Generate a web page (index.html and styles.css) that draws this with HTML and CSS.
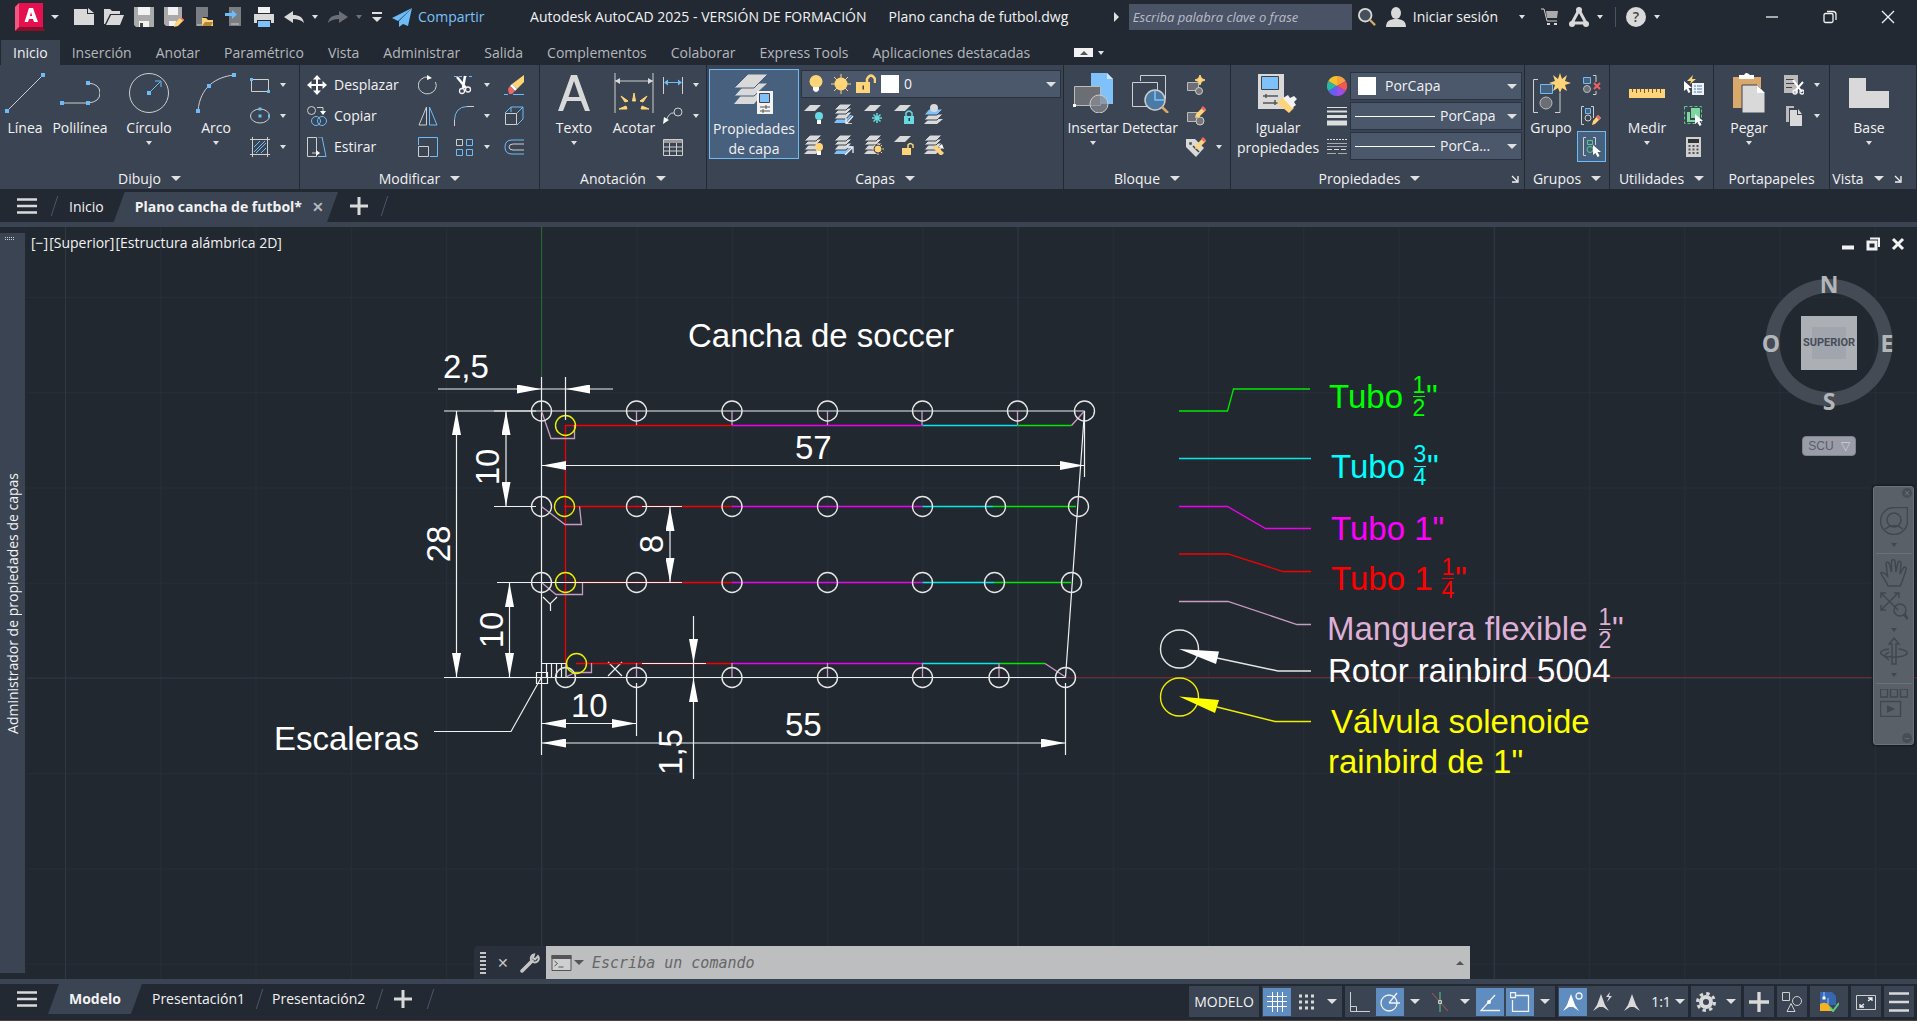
FILE: index.html
```
<!DOCTYPE html>
<html lang="es">
<head>
  <meta charset="UTF-8" />
  <meta name="viewport" content="width=device-width, initial-scale=1.0" />
  <title>Plano cancha de futbol.dwg</title>
  <link rel="stylesheet" href="styles.css">
</head>
<body>

  <!-- Icon library -->
  <svg class="icon-defs" aria-hidden="true">
    <defs>
      <symbol id="logo" viewBox="0 0 30 28"><path d="M0 3 4 0H28V24L30 28H0Z" fill="#8b0e2b"/><path d="M4 0H28V24H4Z" fill="#e51050"/><path d="M0 4 4 0V24L0 28Z" fill="#f3577f"/><path fill-rule="evenodd" d="M14 5h4l5 14h-4l-1-3h-4l-1 3H9.500ZM15 13h2.200L16 9Z" fill="#fff"/></symbol>
      <symbol id="new" viewBox="0 0 20 20"><path d="M0 2h13v5h7v11H0Z" class="fw"/><path d="M14 1l6 5h-6Z" class="fw"/></symbol>
      <symbol id="open" viewBox="0 0 20 20"><path d="M0 2h6l2 2h8v3H6L1 17H0Z" class="fw"/><path d="M7 8h13l-4 10H2Z" class="fw"/></symbol>
      <symbol id="save" viewBox="0 0 20 20"><path d="M0 0h20v20H2l-2-2Z" fill="#aaa"/><path d="M4 0h12v8H4ZM5 14h10v6H5Z" fill="#f2f2f2"/><path d="M6 16h3v4H6Z" fill="#444"/></symbol>
      <symbol id="saveas" viewBox="0 0 20 20"><path d="M0 0h18v12l-7 7H2l-2-2Z" fill="#aaa"/><path d="M4 0h10v8H4ZM5 14h7v5H5Z" fill="#f2f2f2"/><path d="m17 10 3 3-6 6-4 1 1-4Z" class="fy"/><path d="m17 10 3 3-1 1-3-3Z" fill="#e66"/></symbol>
      <symbol id="webopen" viewBox="0 0 20 20"><path d="M2 0h12v10H9v9H2Z" fill="#7a7d82"/><path d="M3 18h6" class="w"/><path d="M8 11h4l2 2h5v6H8Z" class="fy"/><path d="m8 19 3-4h8l-2 4Z" fill="#b8863b"/></symbol>
      <symbol id="websave" viewBox="0 0 20 20"><path d="M5 0h12v19H5Z" fill="#7a7d82"/><path d="M7 17h8" class="w"/><path d="M1 6h7V3l5 4.500-5 4.500V9H1Z" class="fb"/></symbol>
      <symbol id="print" viewBox="0 0 20 20"><path d="M4 0h12v6H4Z" fill="#f2f2f2"/><path d="M0 7h20v9h-3v-3H3v3H0Z" class="fw"/><path d="M4 14h12v6H4Z" fill="#7fc2fb"/></symbol>
      <symbol id="undo" viewBox="0 0 20 20"><path d="M0 10 9 4v4c6 0 10 2 11 8-3-3-6-4-11-4v4Z" class="fw"/></symbol>
      <symbol id="plane" viewBox="0 0 20 20"><path d="M20 1 0 11l6 3Z" class="fb"/><path d="M20 1 7 14v6l4-3 5 2Z" class="fb"/></symbol>
      <symbol id="search" viewBox="0 0 20 20"><circle cx="8" cy="8" r="7" fill="#46505c" stroke="#d9d9d9" stroke-width="2"/><path d="m13 13 6 6" stroke="#d9a86a" stroke-width="2.500"/></symbol>
      <symbol id="user" viewBox="0 0 20 20"><ellipse cx="10" cy="6" rx="5" ry="6" class="fw"/><path d="M0 20c0-6 4-8 10-8s10 2 10 8Z" class="fw"/></symbol>
      <symbol id="cart" viewBox="0 0 18 18"><path d="M0 1h3l3 12h10" class="w"/><path d="M5 3h12l-1 7H6Z" fill="#aaa"/><path d="M6 15h3v2H6zM13 15h3v2h-3z" class="fw"/></symbol>
      <symbol id="apps" viewBox="0 0 20 20"><path d="M10 3 3 16h14Z" fill="none" stroke="#d9d9d9" stroke-width="3"/><circle cx="10" cy="3" r="3" class="fw"/><circle cx="3" cy="17" r="3" class="fw"/><circle cx="17" cy="17" r="3" class="fw"/></symbol>
      <symbol id="min" viewBox="0 0 14 14"><path d="M1 7h12" class="ww"/></symbol>
      <symbol id="restore" viewBox="0 0 14 14"><rect x="1" y="3.500" width="9" height="9" rx="1.500" class="ww"/><path d="M4 1.500h6q3 0 3 3V10" class="ww"/></symbol>
      <symbol id="close" viewBox="0 0 14 14"><path d="m1 1 12 12M13 1 1 13" class="ww"/></symbol>
      <symbol id="burger" viewBox="0 0 20 16"><path d="M0 1.500h20M0 8h20M0 14.500h20" stroke="#d9d9d9" stroke-width="2.500"/></symbol>
      <symbol id="plus" viewBox="0 0 18 18"><path d="M9 0v18M0 9h18" stroke="#d9d9d9" stroke-width="3"/></symbol>

      <symbol id="line" viewBox="0 0 40 40"><path d="M2 38 38 2" class="w"/><path d="M0 36h4v4H0zM36 0h4v4h-4z" class="fb"/></symbol>
      <symbol id="pline" viewBox="0 0 40 40"><path d="M1 30h27q12-1 12-10T28 10" class="w"/><path d="M0 28h4v4H0zM26 28h4v4h-4zM26 8h4v4h-4z" class="fb"/></symbol>
      <symbol id="circle" viewBox="0 0 40 40"><circle cx="20" cy="20" r="19.500" class="w"/><path d="m20 20 11-11M26 8h6v6" class="b"/><path d="M18 18h4v4h-4z" class="fb"/></symbol>
      <symbol id="arc" viewBox="0 0 40 40"><path d="M2 38C4 14 20 4 38 2" class="w"/><path d="M0 36h4v4H0zM11 11h4v4h-4zM36 0h4v4h-4z" class="fb"/></symbol>
      <symbol id="rect" viewBox="0 0 20 20"><path d="M1.500 4.500h17v12h-17z" class="w"/><path d="M0 3h3v3H0zM17 15h3v3h-3z" class="fb"/></symbol>
      <symbol id="ellipse" viewBox="0 0 20 20"><ellipse cx="10" cy="10" rx="9.500" ry="7" class="w"/><path d="M8.500 8.500h3v3h-3zM8.500 1.500h3v3h-3zM18 8.500h2v3h-2z" class="fb"/></symbol>
      <symbol id="hatch" viewBox="0 0 20 20"><path d="M0 2.500h20M0 17.500h20M2.500 0v20M17.500 0v20" class="w"/><path d="m4 10 6-6M4 15 15 4M6 16l10-10M11 16l5-5" class="b"/></symbol>

      <symbol id="move" viewBox="0 0 20 20"><path d="M10 2v16M2 10h16" stroke="#fff" stroke-width="2"/><path d="m10 0 4 4.500H6ZM10 20l4-4.500H6ZM0 10l4.500-4v8ZM20 10l-4.500-4v8Z" fill="#fff"/></symbol>
      <symbol id="copy" viewBox="0 0 20 20"><circle cx="4.500" cy="4.500" r="4" class="w"/><path d="M10 1.500h6V5" class="w"/><path d="M13 5h6l-3 4Z" fill="#fff"/><circle cx="9" cy="15" r="4.500" class="b"/><circle cx="15" cy="15" r="4.500" class="b"/></symbol>
      <symbol id="stretch" viewBox="0 0 20 20"><path d="M.5.5h9v19h-9zM5 16h6" class="w"/><path d="M11 0h4l4 19.500h-8" class="b"/><path d="m9 13 4 3-4 3Z" fill="#fff"/></symbol>
      <symbol id="rotate" viewBox="0 0 20 20"><path d="M17.500 7a9 8.500 0 1 1-7-5" class="w"/><path d="M9 0v5l5-2Z" fill="#fff"/></symbol>
      <symbol id="mirror" viewBox="0 0 20 20"><path d="M8.500 1v18H1Z" class="w"/><path d="M11.500 1v18H19Z" class="b"/></symbol>
      <symbol id="scale" viewBox="0 0 20 20"><path d="M.5 8V.5h19v19H12" class="b"/><path d="M.5 9.500h10v10H.5z" class="w"/></symbol>
      <symbol id="trim" viewBox="0 0 20 20"><path d="M0 1.500h20" class="b" stroke-dasharray="3 2"/><path d="m3 2 9 11M11 1 9 13" stroke="#fff" stroke-width="2.500"/><circle cx="8" cy="16" r="2.500" class="ww"/><circle cx="14" cy="14.500" r="2.500" class="ww"/></symbol>
      <symbol id="fillet" viewBox="0 0 20 20"><path d="M.5 20v-6M13 .5h7" class="w"/><path d="M.5 14Q1 1 13 .5" class="b"/></symbol>
      <symbol id="array" viewBox="0 0 20 20"><path d="M2.500 2.500h6v6h-6z" class="w"/><path d="M12.500 2.500h6v6h-6zM2.500 12.500h6v6h-6zM12.500 12.500h6v6h-6z" class="b"/></symbol>
      <symbol id="erase" viewBox="0 0 20 20"><path d="M20 0v7l-7 7-5-5Z" class="fy"/><path d="m8 9 5 5-2 2-5-5Z" fill="#fff"/><path d="m6 11 5 5-3 3H5l-1-5Z" fill="#e66"/><path d="M0 19.500h4M9 19.500h11" class="b"/></symbol>
      <symbol id="explode" viewBox="0 0 20 20"><path d="M1.500 7.500h11v11h-11z" class="w"/><path d="m1 7 6-6h12v12l-6 6M7 1v5M19 1l-6 6" class="b"/></symbol>
      <symbol id="offset" viewBox="0 0 20 20"><path d="M20 3H8Q1 3 1 10t7 7h12" class="b"/><path d="M20 7H9Q5 7 5 10t4 3h11" class="w"/></symbol>

      <symbol id="text" viewBox="0 0 40 40"><path fill-rule="evenodd" d="M17 2h6l13 36h-5l-4-10H13L9 38H4ZM20 8 14.500 24h11Z" class="fw"/></symbol>
      <symbol id="dim" viewBox="0 0 40 40"><path d="M1 0v40M39 0v40M1 8h38" class="w"/><path d="m1 8 5-3v6ZM39 8l-5-3v6Z" class="fw"/><path d="m18.500 28 1.500-8 1.500 8ZM14 28l-7-5 4 6ZM26 28l7-5-4 6ZM12 33l-7 3h8ZM28 33l7 3h-8Z" fill="#ffd479" stroke="#ffd479"/></symbol>
      <symbol id="dimlin" viewBox="0 0 20 20"><path d="M.5 2v17M19.500 2v17" class="w"/><path d="M2 7.500h16" class="b"/><path d="m1 7.500 4-3v6ZM19 7.500l-4-3v6Z" class="fb"/></symbol>
      <symbol id="leader" viewBox="0 0 20 20"><circle cx="15" cy="6" r="4" class="w"/><path d="M11 7Q6 6 3 15" class="w"/><path d="m0 18 1-7 5 3Z" fill="#fff"/></symbol>
      <symbol id="table" viewBox="0 0 20 20"><path d="M.5 2.500h19v16H.500zM.5 10h19M.5 14h19M6.500 6v12M13.500 6v12" class="w"/><path d="M1 3h18v3H1Z" fill="#999"/></symbol>

      <symbol id="layers" viewBox="0 0 40 40"><path d="M10 18h20L20 30H0Z" class="fw"/><path d="M12 9h22L20 22H0Z" class="fw" stroke="#46607e"/><path d="M14 0h20L20 14H0Z" class="fw" stroke="#46607e"/><path d="M23 17h16v23H23Z" fill="#f2f2f2"/><path d="M25.500 19.500h10v9h-10z" fill="#7fc2fb" stroke="#444"/><path d="M26 33h10M26 37h10M32 31v4M29 35v4" stroke="#555"/></symbol>
      <symbol id="sheet" viewBox="0 0 20 20"><path d="M6 1h11l-6 6H0Z" class="fw"/></symbol>
      <symbol id="stack" viewBox="0 0 20 20"><path d="M6 13h12l-6 6H0Z" class="fw"/><path d="M6 8h12l-6 7H0Z" class="fw" stroke="#3b4453"/><path d="M6 4h12l-6 6H0Z" class="fw" stroke="#3b4453"/><path d="M6 0h12l-6 6H0Z" class="fw" stroke="#3b4453"/></symbol>
      <symbol id="stackblue" viewBox="0 0 20 20"><path d="M6 11h12l-6 8H0Z" fill="#7fc2fb"/><path d="M6 8h12l-6 7H0Z" class="fw" stroke="#3b4453"/><path d="M6 4h12l-6 6H0Z" class="fw" stroke="#3b4453"/><path d="M6 0h12l-6 6H0Z" class="fw" stroke="#3b4453"/></symbol>
      <symbol id="l-off" viewBox="0 0 20 20"><use href="#sheet"/><circle cx="15" cy="12" r="4" fill="#67d9e0"/><path d="M13 16h4v4h-4z" fill="#fff"/></symbol>
      <symbol id="l-match" viewBox="0 0 20 20"><use href="#stackblue"/><path d="m19 12-6 7m-1-5v6h6" class="ww"/></symbol>
      <symbol id="l-freeze" viewBox="0 0 20 20"><use href="#sheet"/><path d="M13 9v10M8 14h10M9.500 10.500l7 7M16.500 10.500l-7 7" stroke="#67d9e0" stroke-width="1.500"/></symbol>
      <symbol id="l-lock" viewBox="0 0 20 20"><use href="#sheet"/><path d="M10 12h10v8H10Z" fill="#67d9e0"/><path d="M12 12V9q3-4 6 0v3" fill="none" stroke="#67d9e0" stroke-width="1.500"/><path d="M14.500 14h1.500v3h-1.500z" fill="#333"/></symbol>
      <symbol id="l-current" viewBox="0 0 20 20"><path d="M5 15h14l-6 5H0Z" class="fw"/><path d="M5 10h14l-6 6H0Z" class="fw" stroke="#3b4453"/><path d="M5 5h14l-6 6H0Z" fill="#7fc2fb" stroke="#3b4453"/><circle cx="10" cy="4" r="4" class="fw"/></symbol>
      <symbol id="l-on" viewBox="0 0 20 20"><use href="#stack"/><circle cx="15" cy="12" r="4" class="fy"/><path d="M13 16h4v4h-4z" fill="#fff"/></symbol>
      <symbol id="l-prev" viewBox="0 0 20 20"><use href="#stackblue"/><path d="m11 20 7-7m-5-1h6v6" class="ww"/></symbol>
      <symbol id="l-thaw" viewBox="0 0 20 20"><use href="#stack"/><path d="M14 8v12M8 14h12M10 10l8 8M18 10l-8 8" stroke="#ffd479"/><circle cx="14" cy="14" r="4" class="fy" stroke="#3b4453"/></symbol>
      <symbol id="l-unlock" viewBox="0 0 20 20"><use href="#sheet"/><path d="M8 13h9v7H8Z" class="fy"/><path d="M14 13v-3q2-3 5 0v3" fill="none" stroke="#ffd479" stroke-width="1.500"/></symbol>
      <symbol id="l-walk" viewBox="0 0 20 20"><use href="#stack"/><path d="m9 13 3-3 8 8-3 3Z" class="fy"/><path d="m14 12 4-3 2 5Z" fill="#fff"/></symbol>
      <symbol id="bulb" viewBox="0 0 20 20"><circle cx="10" cy="7.500" r="6.500" class="fy"/><path d="M7 13h6v3q-3 4-6 0Z" fill="#fff"/></symbol>
      <symbol id="sun" viewBox="0 0 20 20"><path d="M10 0v20M0 10h20M3 3l14 14M17 3 3 17" stroke="#ffd479"/><circle cx="10" cy="10" r="6.500" class="fy"/></symbol>
      <symbol id="unlock" viewBox="0 0 20 20"><path d="M0 8h14v11H0Z" class="fy"/><path d="M11 9V5q4-7 8 0v4" fill="none" stroke="#ffd479" stroke-width="2.500"/><path d="M6.500 11.500h1.500v4H6.500z" fill="#444"/></symbol>

      <symbol id="insert" viewBox="0 0 40 40"><path d="M18 0h16l6 6v25H18Z" fill="#7fc2fb"/><path d="M34 0v6h6Z" fill="#cfe7fd"/><path d="M1.500 13.500h26v19h-26z" fill="#6b6e75" stroke="#bbb"/><circle cx="26" cy="31" r="9" fill="#8a8c92" fill-opacity=".7" stroke="#ccc"/><path d="M0 31h3v3H0z" fill="#fff"/></symbol>
      <symbol id="detect" viewBox="0 0 40 40"><path d="M10.500 8V2.500h25V26M2.500 9.500h25v24h-25z" class="w"/><circle cx="25" cy="27" r="10" fill="#4b7aa5" stroke="#ccc" stroke-width="1.500"/><path d="M25 18v9h9" fill="none" stroke="#7fc2fb" stroke-width="1.500"/><path d="m32 34 6 6" stroke="#d9a86a" stroke-width="2.500"/></symbol>
      <symbol id="blocknew" viewBox="0 0 20 20"><path d="M1.500 7.500h11v8h-11z" fill="#6b6e75" stroke="#bbb"/><circle cx="13" cy="16" r="3.500" fill="#777" stroke="#ccc"/><path d="m14 0 1.500 3.500L19 5l-3.500 1.500L14 10l-1.500-3.500L9 5l3.500-1.500Z" fill="#ffd479" stroke="#ffd479"/></symbol>
      <symbol id="blockedit" viewBox="0 0 20 20"><path d="M1.500 6.500h12v9h-12z" fill="#6b6e75" stroke="#bbb"/><circle cx="14" cy="15" r="4" fill="#777" stroke="#ccc"/><path d="m17 1 3 3-7 7-4 1 1-4Z" class="fy"/><path d="m17 0 3 3-2 2-3-3Z" fill="#e66"/></symbol>
      <symbol id="attr" viewBox="0 0 20 20"><path d="M0 2h9l9 9-8 9L0 10Z" class="fw"/><path d="M4 6h1v1H4zM7 9l6 6" stroke="#444" stroke-width="1.500"/><path d="m17 1 3 3-7 7-4 1 1-4Z" class="fy"/><path d="m17 0 3 3-2 2-3-3Z" fill="#e66"/></symbol>

      <symbol id="matchprop" viewBox="0 0 40 40"><path d="M0 1h26v35H0Z" class="fw"/><path d="M3.500 3.500h17v13h-17z" fill="#7fc2fb" stroke="#444"/><path d="M5 23h15M5 30h15M8 21v4M17 27v5" stroke="#555" stroke-width="1.500"/><path d="m19 30 6-6 11 11-5 5Z" class="fy"/><path d="m25 25 5-3 2 3 4-2 3 3-3 3 2 3-4 3Z" fill="#f2f2f2"/></symbol>
      <symbol id="wheel" viewBox="0 0 20 20"><path d="M10 10V0a10 10 0 0 1 8.700 5Z" fill="#f7a23c"/><path d="M10 10l8.700-5a10 10 0 0 1 0 10Z" fill="#ef5a55"/><path d="M10 10l8.700 5A10 10 0 0 1 10 20Z" fill="#a24ce8"/><path d="M10 10v10a10 10 0 0 1-8.700-5Z" fill="#6a5cf0"/><path d="M10 10l-8.700 5a10 10 0 0 1 0-10Z" fill="#25b8a4"/><path d="M10 10 1.300 5A10 10 0 0 1 10 0Z" fill="#f5c02c"/></symbol>
      <symbol id="weights" viewBox="0 0 20 20"><path d="M0 1.500h20" stroke="#ddd"/><path d="M0 5.500h20" stroke="#ddd" stroke-width="2"/><path d="M0 10.500h20" stroke="#ddd" stroke-width="3"/><path d="M0 17h20" stroke="#ddd" stroke-width="5"/></symbol>
      <symbol id="ltypes" viewBox="0 0 20 20"><path d="M0 3.500h20" stroke="#ddd" stroke-dasharray="2 1"/><path d="M0 7.500h20M0 10.500h20" stroke="#aaa"/><path d="M0 13.500h20" stroke="#ddd" stroke-dasharray="5 2"/><path d="M0 17.500h20" stroke="#aaa" stroke-dasharray="9 2"/></symbol>

      <symbol id="group" viewBox="0 0 40 40"><path d="M7 6.500H2.500v33H7M24 39.500h5V20" class="w"/><path d="M9.500 11.500h12v9h-12z" fill="#46607e" stroke="#6dbcf8"/><circle cx="15" cy="30" r="6" fill="#6b6e75" stroke="#bbb"/><path d="m29 0 2 6 5-4-2 6 6 2-6 2 2 6-5-3-2 5-2-5-5 3 2-6-6-2 6-2-2-6 5 4Z" class="fy"/></symbol>
      <symbol id="ungroup" viewBox="0 0 20 20"><path d="M2.500 2.500h7v6h-7z" fill="#46607e" stroke="#6dbcf8"/><circle cx="6" cy="14" r="3.500" fill="#6b6e75" stroke="#bbb"/><path d="M12 .5h3V7M12 19.500h3V16" class="w"/><path d="m13 8 6 6m0-6-6 6" stroke="#f0605f" stroke-width="2"/></symbol>
      <symbol id="groupedit" viewBox="0 0 20 20"><path d="M3 .5H.500v18H3M10 .5h2.500V12" class="w"/><path d="M4.500 2.500h5v5h-5z" fill="#46607e" stroke="#6dbcf8"/><circle cx="7" cy="12" r="3" class="w"/><path d="m17 9 3 3-6 6-3 1 1-4Z" class="fy"/><path d="m17 9 3 3-2 2-3-3Z" fill="#e66"/></symbol>
      <symbol id="groupsel" viewBox="0 0 20 20"><path d="M4 .5H1.500v18H4M11 .5h2.500V8" class="w"/><path d="M5.500 3.500h5v4h-5z" fill="none" stroke="#5ec985"/><circle cx="8" cy="12.500" r="3" fill="none" stroke="#5ec985"/><use href="#cursor" x="11" y="8"/></symbol>
      <g id="cursor"><path d="M0 0v10l2.500-2 2 4 2-1-2-4H8Z" fill="#fff"/></g>
      <symbol id="measure" viewBox="0 0 40 40"><path d="M2 16h36v9H2Z" class="fy"/><path d="M5.500 16v3M9.500 16v4M13.500 16v3M17.500 16v4M21.500 16v3M25.500 16v4M29.500 16v3M33.500 16v4" stroke="#6b5a33"/></symbol>
      <symbol id="qselect" viewBox="0 0 20 20"><path d="m9 0-6 6h4l-1 3 6-5H8Z" class="fy"/><use href="#cursor" x="0" y="6"/><path d="M8 8h12v12H8Z" fill="#f2f2f2"/><path d="M10 11h2m1 0h5M10 14h2m1 0h5M10 17h2m1 0h5" stroke="#3b7fc4"/></symbol>
      <symbol id="selall" viewBox="0 0 20 20"><path d="M.5.5h17v17H.500z" fill="none" stroke="#5ec985" stroke-dasharray="3 2"/><path d="M3 6h3v8h8v2H3Z" fill="#7fd6a0"/><path d="M7 2h9v10H7Z" fill="#7fd6a0"/><use href="#cursor" x="11" y="8"/></symbol>
      <symbol id="calc" viewBox="0 0 20 20"><path d="M2 0h15v20H2Z" fill="#d0d0d0"/><path d="M4 2h11v4H4Z" fill="#333"/><path d="M4.500 9h10M4.500 12.500h10M4.500 16h10" stroke="#555" stroke-width="2" stroke-dasharray="2 2"/></symbol>
      <symbol id="paste" viewBox="0 0 40 40"><path d="M4 4h28v31H4Z" fill="#d9a86a"/><path d="M10 2h5q2-4 6 0h4v4H10Z" fill="#fff"/><path d="M13 12h15l8 8v20H13Z" class="fw" stroke="#3b4453"/><path d="M28 12v8h8Z" fill="#fff"/></symbol>
      <symbol id="cut" viewBox="0 0 20 20"><path d="M0 0h14v18H0Z" fill="#bbb"/><path d="M2 4.500h8M2 8.500h8M2 12.500h6" stroke="#444"/><path d="m9 5 9 12M19 7l-8 9" stroke="#fff" stroke-width="2"/><circle cx="11" cy="17" r="2" class="ww"/><circle cx="18" cy="17" r="2" class="ww"/></symbol>
      <symbol id="pages" viewBox="0 0 20 20"><path d="M2 0h8v2H5v14H2Z" fill="#bbb"/><path d="M6 4h7v5h5v11H6Z" class="fw"/><path d="m14 3 4 5h-4Z" class="fw"/></symbol>
      <symbol id="base" viewBox="0 0 40 40"><path d="M0 5h17v13h23v17H0Z" class="fw"/></symbol>
      <symbol id="launch" viewBox="0 0 8 8"><path d="m1 1 5 5M7 1v6H1" class="ww"/></symbol>

      <symbol id="s-grid" viewBox="0 0 20 20"><path d="M5.500 0v20M10.500 0v20M15.500 0v20M0 4.500h20M0 9.500h20M0 14.500h20" stroke="#fff"/></symbol>
      <symbol id="s-dots" viewBox="0 0 20 20"><path d="M2 4h16M2 10h16M2 16h16" stroke="#d9d9d9" stroke-width="3" stroke-dasharray="3 3"/></symbol>
      <symbol id="s-ortho" viewBox="0 0 20 20"><path d="M.5 0v19.500H20M.5 14.500h6v5" class="w"/></symbol>
      <symbol id="s-polar" viewBox="0 0 20 20"><circle cx="9" cy="11" r="8" class="ww"/><path d="M9 11h11M9 11l8-10" class="ww"/></symbol>
      <symbol id="s-iso" viewBox="0 0 20 20"><path d="m2 1 16 18" stroke="#b5555c"/><path d="M10 0v20" stroke="#5ec985"/><path d="M8.500 8.500h3v3h-3z" class="w"/></symbol>
      <symbol id="s-track" viewBox="0 0 20 20"><path d="M15 3 1 18.500h19" class="ww"/><circle cx="9" cy="10" r="2" fill="#fff"/></symbol>
      <symbol id="s-snap" viewBox="0 0 20 20"><path d="M6 3.500h12.500v16H2.500V8M.5.5h5v5h-5z" class="ww"/></symbol>
      <symbol id="s-anno" viewBox="0 0 20 20"><path d="m9 2 4 11 4 6-6-4H7l-6 4 4-6Z" class="fw"/></symbol>
      <symbol id="s-annovis" viewBox="0 0 20 20"><path d="m8 2 4 11 4 6-6-4H6l-6 4 4-6Z" fill="#fff"/><circle cx="16" cy="4" r="3" class="ww"/></symbol>
      <symbol id="s-annoauto" viewBox="0 0 20 20"><path d="m8 2 4 11 4 6-6-4H6l-6 4 4-6Z" class="fw"/><path d="m17 0-4 5h3l-2 5 5-6h-3Z" class="fw"/></symbol>
      <symbol id="s-gear" viewBox="0 0 20 20"><circle cx="10" cy="10" r="5" fill="none" stroke="#d9d9d9" stroke-width="4"/><circle cx="10" cy="10" r="8.500" fill="none" stroke="#d9d9d9" stroke-width="3" stroke-dasharray="3.400 3.270"/></symbol>
      <symbol id="s-isolate" viewBox="0 0 20 20"><path d="M.5.5h7v8h-7zM5 19.500l4-8 4 8Z" class="w"/><circle cx="15" cy="9" r="4.500" class="w"/></symbol>
      <symbol id="s-hw" viewBox="0 0 20 20"><path d="M1 0h12l4 4v9H1Z" fill="#3667b0"/><path d="M1 12q5-3 9 1l4 6H1Z" fill="#f5b324"/><path d="M5 0v6M9 6v6" stroke="#9cc8f5"/><path d="M3.500 4.500h3v3h-3z" fill="#fff"/><path d="m11 15 3 4 6-8" fill="none" stroke="#5ec985" stroke-width="2"/></symbol>
      <symbol id="s-full" viewBox="0 0 20 20"><path d="M.5 3.500h19v14H.500z" class="w"/><path d="m12 9 4-3m-4 0h4v3M8 12l-4 3m0-3v3h4" class="ww"/></symbol>
      <symbol id="s-burger" viewBox="0 0 20 20"><path d="M0 1.500h20M0 10h20M0 18.500h20" stroke="#d9d9d9" stroke-width="2.500"/></symbol>

      <symbol id="wrench" viewBox="0 0 20 20"><path d="M2 18 12 8" stroke="#c5c5c5" stroke-width="3.500" stroke-linecap="round"/><path d="M18 3a4 4 0 1 1-4-1.500L13 5l2 1.500Z" fill="none" stroke="#c5c5c5" stroke-width="2"/></symbol>
      <symbol id="prompt" viewBox="0 0 20 16"><path d="M.5.5h19v15H.500z" fill="#cfcfcf" stroke="#555"/><path d="M0 0h20v4H0Z" fill="#555"/><path d="m3 6 3 2.500L3 11M7 12h5" fill="none" stroke="#555"/></symbol>
      <symbol id="n-wheel" viewBox="0 0 28 28"><path d="M14 .5h13.500V14A13.500 13.500 0 1 1 14 .5Z" class="n"/><circle cx="14" cy="13" r="7" class="n"/><path d="M5 22q9-7 18 0" class="n"/></symbol>
      <symbol id="n-hand" viewBox="0 0 28 28"><path d="M8 27C6 22 3 18 .5 14q3-2 7 3L6 4q2-2 3.500 1l2 8V2q2-3 3.500 0l1 11 2-10q2-2 3 1l-1 11 4-7q3 0 2 3l-4 12-2 4Z" class="n"/></symbol>
      <symbol id="n-zoom" viewBox="0 0 28 28"><path d="m1 1 17 17M18 1 1 18M1 6V1h5M14 1h5v5M1 13v5h5" class="n"/><circle cx="20" cy="18" r="6" class="n"/><path d="m24 22 4 5" stroke="#41474f" stroke-width="3"/></symbol>
      <symbol id="n-orbit" viewBox="0 0 28 28"><path d="m14 1-5 6h3v20h4V7h3Z" class="n"/><path d="M9 12Q1 13 .5 16q2 4 13.500 4t13.500-4q-1-3-9-4M9 15l-5 4 5 4" class="n"/></symbol>
      <symbol id="n-show" viewBox="0 0 28 28"><path d="M.5 0h7v8h-7zM10.500 0h7v8h-7zM20.500 0h7v8h-7zM.5 12.500h20v15H.500z" class="n"/><path d="m7 16 8 4-8 4Z" fill="#41474f"/></symbol>
    </defs>
  </svg>

  <!-- Title bar -->
  <header class="title-bar">
    <div class="quick-access">
      <button class="app-logo" aria-label="Menú de la aplicación"><svg class="logo"><use href="#logo"/></svg><i class="caret"></i></button>
      <button aria-label="Nuevo"><svg class="i20"><use href="#new"/></svg></button>
      <button aria-label="Abrir"><svg class="i20"><use href="#open"/></svg></button>
      <button aria-label="Guardar"><svg class="i20"><use href="#save"/></svg></button>
      <button aria-label="Guardar como"><svg class="i20"><use href="#saveas"/></svg></button>
      <button aria-label="Abrir desde web"><svg class="i20"><use href="#webopen"/></svg></button>
      <button aria-label="Guardar en web"><svg class="i20"><use href="#websave"/></svg></button>
      <button aria-label="Trazar"><svg class="i20"><use href="#print"/></svg></button>
      <button class="drop" aria-label="Deshacer"><svg class="i20"><use href="#undo"/></svg><i class="caret"></i></button>
      <button class="drop redo" aria-label="Rehacer"><svg class="i20"><use href="#undo"/></svg><i class="caret"></i></button>
      <button class="customize" aria-label="Personalizar"><i class="caret big-caret"></i></button>
      <button class="share"><svg class="i20"><use href="#plane"/></svg>Compartir</button>
    </div>
    <h1 class="app-title"><span>Autodesk AutoCAD 2025 - VERSIÓN DE FORMACIÓN</span><span>Plano cancha de futbol.dwg</span></h1>
    <div class="info-center">
      <i class="caret-right"></i>
      <input class="search-box" type="search" placeholder="Escriba palabra clave o frase" aria-label="Buscar">
      <button aria-label="Buscar"><svg class="i18"><use href="#search"/></svg></button>
      <button class="sign-in"><svg class="i20"><use href="#user"/></svg>Iniciar sesión<i class="caret"></i></button>
      <button aria-label="Tienda"><svg class="i18"><use href="#cart"/></svg></button>
      <button class="drop" aria-label="Aplicaciones"><svg class="i20"><use href="#apps"/></svg><i class="caret"></i></button>
      <button class="drop help" aria-label="Ayuda"><span class="question">?</span><i class="caret"></i></button>
    </div>
    <div class="window-buttons">
      <button aria-label="Minimizar"><svg class="i14"><use href="#min"/></svg></button>
      <button aria-label="Restaurar"><svg class="i14"><use href="#restore"/></svg></button>
      <button aria-label="Cerrar"><svg class="i14"><use href="#close"/></svg></button>
    </div>
  </header>

  <!-- Ribbon tabs -->
  <nav class="ribbon-tabs">
    <button class="active">Inicio</button>
    <button>Inserción</button>
    <button>Anotar</button>
    <button>Paramétrico</button>
    <button>Vista</button>
    <button>Administrar</button>
    <button>Salida</button>
    <button>Complementos</button>
    <button>Colaborar</button>
    <button>Express Tools</button>
    <button>Aplicaciones destacadas</button>
    <button class="collapse" aria-label="Minimizar cinta"><span class="collapse-box"><i class="caret-up"></i></span><i class="caret"></i></button>
  </nav>

  <!-- Ribbon -->
  <section class="ribbon">
    <div class="panel">
      <div class="tools draw-tools">
        <button class="large"><svg class="i40"><use href="#line"/></svg>Línea</button>
        <button class="large"><svg class="i40"><use href="#pline"/></svg>Polilínea</button>
        <button class="large"><svg class="i40"><use href="#circle"/></svg>Círculo<i class="caret"></i></button>
        <button class="large"><svg class="i40"><use href="#arc"/></svg>Arco<i class="caret"></i></button>
        <div class="stack">
          <button class="small" aria-label="Rectángulo"><svg class="i20"><use href="#rect"/></svg><i class="caret"></i></button>
          <button class="small" aria-label="Elipse"><svg class="i20"><use href="#ellipse"/></svg><i class="caret"></i></button>
          <button class="small" aria-label="Sombreado"><svg class="i20"><use href="#hatch"/></svg><i class="caret"></i></button>
        </div>
      </div>
      <button class="panel-title">Dibujo<i class="caret big-caret"></i></button>
    </div>

    <div class="panel">
      <div class="tools modify-tools">
        <div class="stack">
          <button class="small"><svg class="i20"><use href="#move"/></svg>Desplazar</button>
          <button class="small"><svg class="i20"><use href="#copy"/></svg>Copiar</button>
          <button class="small"><svg class="i20"><use href="#stretch"/></svg>Estirar</button>
        </div>
        <div class="stack">
          <button class="small" aria-label="Girar"><svg class="i20"><use href="#rotate"/></svg></button>
          <button class="small" aria-label="Simetría"><svg class="i20"><use href="#mirror"/></svg></button>
          <button class="small" aria-label="Escala"><svg class="i20"><use href="#scale"/></svg></button>
        </div>
        <div class="stack">
          <button class="small" aria-label="Recortar"><svg class="i20"><use href="#trim"/></svg><i class="caret"></i></button>
          <button class="small" aria-label="Empalme"><svg class="i20"><use href="#fillet"/></svg><i class="caret"></i></button>
          <button class="small" aria-label="Matriz"><svg class="i20"><use href="#array"/></svg><i class="caret"></i></button>
        </div>
        <div class="stack">
          <button class="small" aria-label="Borrar"><svg class="i20"><use href="#erase"/></svg></button>
          <button class="small" aria-label="Descomponer"><svg class="i20"><use href="#explode"/></svg></button>
          <button class="small" aria-label="Desfase"><svg class="i20"><use href="#offset"/></svg></button>
        </div>
      </div>
      <button class="panel-title">Modificar<i class="caret big-caret"></i></button>
    </div>

    <div class="panel">
      <div class="tools note-tools">
        <button class="large"><svg class="i40"><use href="#text"/></svg>Texto<i class="caret"></i></button>
        <button class="large"><svg class="i40"><use href="#dim"/></svg>Acotar</button>
        <div class="stack">
          <button class="small" aria-label="Lineal"><svg class="i20"><use href="#dimlin"/></svg><i class="caret"></i></button>
          <button class="small" aria-label="Directriz"><svg class="i20"><use href="#leader"/></svg><i class="caret"></i></button>
          <button class="small" aria-label="Tabla"><svg class="i20"><use href="#table"/></svg></button>
        </div>
      </div>
      <button class="panel-title">Anotación<i class="caret big-caret"></i></button>
    </div>

    <div class="panel">
      <div class="tools layer-tools">
        <button class="large pressed"><svg class="i40"><use href="#layers"/></svg>Propiedades<br>de capa</button>
        <div class="layer-side">
          <div class="combo layer-combo">
            <svg class="i20"><use href="#bulb"/></svg>
            <svg class="i20"><use href="#sun"/></svg>
            <svg class="i20"><use href="#unlock"/></svg>
            <span class="swatch"></span>
            <select aria-label="Capa"><option>0</option></select>
            <i class="caret big-caret"></i>
          </div>
          <div class="layer-icons">
            <button aria-label="Desactivar"><svg class="i20"><use href="#l-off"/></svg></button>
            <button aria-label="Igualar capa"><svg class="i20"><use href="#l-match"/></svg></button>
            <button aria-label="Inutilizar"><svg class="i20"><use href="#l-freeze"/></svg></button>
            <button aria-label="Bloquear"><svg class="i20"><use href="#l-lock"/></svg></button>
            <button aria-label="Establecer actual"><svg class="i20"><use href="#l-current"/></svg></button>
            <button aria-label="Activar todas"><svg class="i20"><use href="#l-on"/></svg></button>
            <button aria-label="Previa"><svg class="i20"><use href="#l-prev"/></svg></button>
            <button aria-label="Reutilizar"><svg class="i20"><use href="#l-thaw"/></svg></button>
            <button aria-label="Desbloquear"><svg class="i20"><use href="#l-unlock"/></svg></button>
            <button aria-label="Recorrer capas"><svg class="i20"><use href="#l-walk"/></svg></button>
          </div>
        </div>
      </div>
      <button class="panel-title">Capas<i class="caret big-caret"></i></button>
    </div>

    <div class="panel">
      <div class="tools block-tools">
        <button class="large"><svg class="i40"><use href="#insert"/></svg>Insertar<i class="caret"></i></button>
        <button class="large"><svg class="i40"><use href="#detect"/></svg>Detectar</button>
        <div class="stack">
          <button class="small" aria-label="Crear bloque"><svg class="i20"><use href="#blocknew"/></svg></button>
          <button class="small" aria-label="Editar bloque"><svg class="i20"><use href="#blockedit"/></svg></button>
          <button class="small" aria-label="Editar atributos"><svg class="i20"><use href="#attr"/></svg><i class="caret"></i></button>
        </div>
      </div>
      <button class="panel-title">Bloque<i class="caret big-caret"></i></button>
    </div>

    <div class="panel">
      <div class="tools prop-tools">
        <button class="large"><svg class="i40"><use href="#matchprop"/></svg>Igualar<br>propiedades</button>
        <div class="prop-rows">
          <svg class="i20"><use href="#wheel"/></svg>
          <div class="combo"><span class="swatch"></span><select aria-label="Color"><option>PorCapa</option></select><i class="caret big-caret"></i></div>
          <svg class="i20"><use href="#weights"/></svg>
          <div class="combo"><span class="sample"></span><select aria-label="Grosor de línea"><option>PorCapa</option></select><i class="caret big-caret"></i></div>
          <svg class="i20"><use href="#ltypes"/></svg>
          <div class="combo"><span class="sample"></span><select aria-label="Tipo de línea"><option>PorCa...</option></select><i class="caret big-caret"></i></div>
        </div>
      </div>
      <div class="title-row">
        <button class="panel-title">Propiedades<i class="caret big-caret"></i></button>
        <button class="launcher" aria-label="Paleta Propiedades"><svg class="i8"><use href="#launch"/></svg></button>
      </div>
    </div>

    <div class="panel">
      <div class="tools group-tools">
        <button class="large"><svg class="i40"><use href="#group"/></svg>Grupo</button>
        <div class="stack">
          <button class="small" aria-label="Desagrupar"><svg class="i20"><use href="#ungroup"/></svg></button>
          <button class="small" aria-label="Editar grupo"><svg class="i20"><use href="#groupedit"/></svg></button>
          <button class="small pressed" aria-label="Selección de grupo"><svg class="i20"><use href="#groupsel"/></svg></button>
        </div>
      </div>
      <button class="panel-title">Grupos<i class="caret big-caret"></i></button>
    </div>

    <div class="panel">
      <div class="tools util-tools">
        <button class="large"><svg class="i40"><use href="#measure"/></svg>Medir<i class="caret"></i></button>
        <div class="stack">
          <button class="small" aria-label="Selección rápida"><svg class="i20"><use href="#qselect"/></svg></button>
          <button class="small" aria-label="Seleccionar todo"><svg class="i20"><use href="#selall"/></svg></button>
          <button class="small" aria-label="Calculadora"><svg class="i20"><use href="#calc"/></svg></button>
        </div>
      </div>
      <button class="panel-title">Utilidades<i class="caret big-caret"></i></button>
    </div>

    <div class="panel">
      <div class="tools clip-tools">
        <button class="large"><svg class="i40"><use href="#paste"/></svg>Pegar<i class="caret"></i></button>
        <div class="stack">
          <button class="small" aria-label="Cortar"><svg class="i20"><use href="#cut"/></svg><i class="caret"></i></button>
          <button class="small" aria-label="Copiar al portapapeles"><svg class="i20"><use href="#pages"/></svg><i class="caret"></i></button>
        </div>
      </div>
      <div class="panel-title">Portapapeles</div>
    </div>

    <div class="panel">
      <div class="tools view-tools">
        <button class="large"><svg class="i40"><use href="#base"/></svg>Base<i class="caret"></i></button>
      </div>
      <div class="title-row view-title">
        <button class="panel-title">Vista<i class="caret big-caret"></i></button>
        <button class="launcher" aria-label="Más vistas"><svg class="i8"><use href="#launch"/></svg></button>
      </div>
    </div>
  </section>

  <!-- File tabs -->
  <nav class="tab-bar file-tabs">
    <button class="menu-button" aria-label="Menú de archivos"><svg class="burger"><use href="#burger"/></svg></button>
    <i class="slash"></i>
    <button class="tab">Inicio</button>
    <div class="tab active"><button>Plano cancha de futbol*</button><button class="tab-close" aria-label="Cerrar archivo">✕</button></div>
    <button class="tab-add" aria-label="Nuevo dibujo"><svg class="i18"><use href="#plus"/></svg></button>
    <i class="slash"></i>
  </nav>

  <!-- Workspace -->
  <main class="workspace">
    <aside class="palette"><i class="palette-grip"></i><span>Administrador de propiedades de capas</span></aside>
    <div class="canvas">
      <svg class="drawing" role="img" aria-label="Plano cancha de soccer">
        <defs>
          <pattern id="minor" x="65" y="297" width="95.250" height="95.250" patternUnits="userSpaceOnUse"><path d="M.5 0V95.250M0 .5H95.250" stroke="#262e39"/></pattern>
          <pattern id="major" x="65" y="201.250" width="476.250" height="476.250" patternUnits="userSpaceOnUse"><path d="M.5 0V476.250M0 .5H476.250" stroke="#2f3644"/></pattern>
          <marker id="arrow" viewBox="0 0 24 9" refX="24" refY="4.500" markerWidth="24" markerHeight="9" markerUnits="userSpaceOnUse" orient="auto-start-reverse"><path d="M0 0v9L24 4.500Z" fill="#fff" stroke="none"/></marker>
        </defs>
        <g transform="translate(-27 -227)">
          <rect width="4000" height="3000" fill="url(#minor)"/>
          <rect width="4000" height="3000" fill="url(#major)"/>
          <path d="M541.500 227V378" stroke="#23692b"/>
          <path d="M541 677.500H4000" stroke="#702a30"/>

          <!-- Field outline -->
          <g class="outline">
            <path d="M444 411H1084.500M541.500 377V755M444 677.500H1065.500M1084.500 411 1065.500 677.500"/>
            <path d="M541.500 663.500H566V677M546.500 663V677M551.500 663V677M556.500 663V677M561.500 663V677"/>
            <path d="M536.500 672.500h11v11h-11zM543 597l7 7 7-7M550.500 604v7M608 662l14 14M622 662l-14 14"/>
            <path d="M541 678 511 731.500H434"/>
          </g>

          <!-- Pipes -->
          <path class="red" d="M565.500 425V663M565 425.500H732M564 506.500H732M565 582.500H732M576 663.500H732"/>
          <path class="magenta" d="M732 425.500H922.500M732 506.500H922.500M732 582.500H922.500M732 663.500H922.500"/>
          <path class="cyan" d="M922.500 425.500H1017.500M922.500 506.500H993M922.500 582.500H994M922.500 663.500H999"/>
          <path class="green" d="M1017.500 425.500H1071.500M993 506.500H1076M994 582.500H1071M999 663.500H1045"/>
          <path class="pink" d="M541.500 411 551 438.500H574.500V425M636.500 411V425M732 411V425M827.500 411V425M922 411V425M1017.500 411V425M1071.500 425.500 1084.500 411M541.500 506.500 565 524.500H581.500L579.500 506.500M541.500 582.500 556 594.500H582.500V582M566 677 575 672.500H591.500V663M636.500 663V677M732 663V677M827.500 663V677M922.500 663V677M999 663V677M1045 663.500 1065.500 677"/>

          <!-- Rotors -->
          <g class="rotor">
            <circle cx="541.500" cy="411" r="10"/><circle cx="636.500" cy="411" r="10"/><circle cx="732" cy="411" r="10"/><circle cx="827.500" cy="411" r="10"/><circle cx="922.500" cy="411" r="10"/><circle cx="1017.500" cy="411" r="10"/><circle cx="1084.500" cy="411" r="10"/>
            <circle cx="541.500" cy="506.500" r="10"/><circle cx="636.500" cy="506.500" r="10"/><circle cx="732" cy="506.500" r="10"/><circle cx="827.500" cy="506.500" r="10"/><circle cx="922.500" cy="506.500" r="10"/><circle cx="995.500" cy="506.500" r="10"/><circle cx="1078.500" cy="506.500" r="10"/>
            <circle cx="541.500" cy="582.500" r="10"/><circle cx="636.500" cy="582.500" r="10"/><circle cx="732" cy="582.500" r="10"/><circle cx="827.500" cy="582.500" r="10"/><circle cx="922.500" cy="582.500" r="10"/><circle cx="994.500" cy="582.500" r="10"/><circle cx="1071.500" cy="582.500" r="10"/>
            <circle cx="565.500" cy="677.500" r="10"/><circle cx="636.500" cy="677.500" r="10"/><circle cx="732" cy="677.500" r="10"/><circle cx="827.500" cy="677.500" r="10"/><circle cx="922.500" cy="677.500" r="10"/><circle cx="999" cy="677.500" r="10"/><circle cx="1065.500" cy="677.500" r="10"/>
          </g>
          <!-- Solenoid valves -->
          <g class="valve">
            <circle cx="565.500" cy="425.500" r="10"/><circle cx="564.500" cy="506.500" r="10"/><circle cx="565.500" cy="582.500" r="10"/><circle cx="576.500" cy="663.500" r="10"/>
          </g>

          <!-- Dimensions -->
          <g class="dims">
            <path d="M541 389H565M565.500 377V420M494 411H536M494 506.500H536M497 582.500H682M642 506.500H682M642 663.500H706M1084.500 411V477M636.500 683V736M1065.500 683V755M604 677.500H706"/>
            <path d="M438 389H541" marker-end="url(#arrow)"/>
            <path d="M613 389H566" marker-end="url(#arrow)"/>
            <path d="M542 465.500H1084" marker-start="url(#arrow)" marker-end="url(#arrow)"/>
            <path d="M506 411V506" marker-start="url(#arrow)" marker-end="url(#arrow)"/>
            <path d="M456.500 411V677" marker-start="url(#arrow)" marker-end="url(#arrow)"/>
            <path d="M670 507V582" marker-start="url(#arrow)" marker-end="url(#arrow)"/>
            <path d="M509.500 583V677" marker-start="url(#arrow)" marker-end="url(#arrow)"/>
            <path d="M542 723.500H636" marker-start="url(#arrow)" marker-end="url(#arrow)"/>
            <path d="M542 743H1065" marker-start="url(#arrow)" marker-end="url(#arrow)"/>
            <path d="M693.500 616V663" marker-end="url(#arrow)"/>
            <path d="M693.500 779V678" marker-end="url(#arrow)"/>
            <path d="M693.500 663V678"/>
          </g>
          <g class="cad-text">
            <text x="688" y="347">Cancha de soccer</text>
            <text x="443" y="378">2,5</text>
            <text x="795" y="459">57</text>
            <text x="571" y="717">10</text>
            <text x="785" y="736">55</text>
            <text x="274" y="750">Escaleras</text>
            <g text-anchor="middle">
              <text transform="translate(499 467) rotate(-90)">10</text>
              <text transform="translate(450 544) rotate(-90)">28</text>
              <text transform="translate(663 544) rotate(-90)">8</text>
              <text transform="translate(503 630) rotate(-90)">10</text>
              <text transform="translate(682 752) rotate(-90)">1,5</text>
            </g>
          </g>

          <!-- Legend -->
          <path class="green" d="M1179 411H1227.500L1233.500 389H1310"/>
          <path class="cyan" d="M1179 458.500H1311"/>
          <path class="magenta" d="M1179 506.500H1227.500L1265.500 528.500H1311"/>
          <path class="red" d="M1179 554H1228L1283 571.500H1311"/>
          <path class="pink" d="M1179 601.500H1228L1297 624.500H1311"/>
          <g class="rotor"><circle cx="1179.500" cy="649" r="19"/><path d="M1217 658 1278 671H1311"/></g>
          <path d="M1179 649 1219 651.500 1216 664Z" fill="#fff"/>
          <g class="valve"><circle cx="1179.500" cy="697" r="19"/><path d="M1217 707 1275 721.500H1311"/></g>
          <path d="M1179 696.500 1219 700 1215 713Z" fill="#ff0"/>
          <g class="cad-text">
            <g fill="#0f0"><text x="1329" y="408">Tubo</text><text x="1426" y="408">"</text><text class="frac" x="1419" y="393">1</text><text class="frac" x="1419" y="416">2</text><path d="M1413 396.500h12" stroke="#0f0"/></g>
            <g fill="#0ff"><text x="1331" y="478">Tubo</text><text x="1427" y="478">"</text><text class="frac" x="1420" y="462">3</text><text class="frac" x="1420" y="485">4</text><path d="M1414 466.500h12" stroke="#0ff"/></g>
            <g fill="#f0f"><text x="1331" y="540">Tubo 1"</text></g>
            <g fill="#f00"><text x="1331" y="590">Tubo 1</text><text x="1455" y="590">"</text><text class="frac" x="1448" y="575">1</text><text class="frac" x="1448" y="598">4</text><path d="M1442 578.500h12" stroke="#f00"/></g>
            <g fill="#dfb0d6"><text x="1327" y="640">Manguera flexible</text><text x="1612" y="640">"</text><text class="frac" x="1605" y="625">1</text><text class="frac" x="1605" y="648">2</text><path d="M1599 629.500h12" stroke="#dfb0d6"/></g>
            <g fill="#fff"><text x="1328" y="682">Rotor rainbird 5004</text></g>
            <g fill="#ff0"><text x="1331" y="733">Válvula solenoide</text><text x="1328" y="773">rainbird de 1"</text></g>
          </g>
        </g>
      </svg>

      <div class="view-controls"><button>[−]</button><button>[Superior]</button><button>[Estructura alámbrica 2D]</button></div>

      <div class="view-window">
        <button aria-label="Minimizar vista"><svg class="i14"><path d="M1 10.500h12" stroke="#f2f2f2" stroke-width="4"/></svg></button>
        <button aria-label="Restaurar vista"><svg class="i14"><path d="M4 1.500h9V10" fill="none" stroke="#f2f2f2" stroke-width="2"/><path d="M2 5h8v7H2Z" fill="none" stroke="#f2f2f2" stroke-width="3"/></svg></button>
        <button aria-label="Cerrar vista"><svg class="i14"><path d="m2 2 10 10M12 2 2 12" stroke="#f2f2f2" stroke-width="3"/></svg></button>
      </div>

      <div class="view-cube">
        <div class="compass">
          <span class="north">N</span>
          <span class="west">O</span>
          <button class="cube">SUPERIOR</button>
          <span class="east">E</span>
          <span class="south">S</span>
        </div>
        <button class="scu">SCU <span>▽</span></button>
      </div>

      <div class="nav-bar">
        <span class="dot">×</span>
        <button aria-label="Rueda de navegación"><svg class="i28"><use href="#n-wheel"/></svg><i class="caret"></i></button>
        <hr>
        <button aria-label="Encuadre"><svg class="i28"><use href="#n-hand"/></svg></button>
        <button aria-label="Zoom"><svg class="i28"><use href="#n-zoom"/></svg><i class="caret"></i></button>
        <button aria-label="Órbita"><svg class="i28"><use href="#n-orbit"/></svg><i class="caret"></i></button>
        <hr>
        <button aria-label="ShowMotion"><svg class="i28"><use href="#n-show"/></svg></button>
        <span class="dot last">−</span>
      </div>

      <div class="command-line">
        <div class="command-handle">
          <i class="grip"></i>
          <button aria-label="Cerrar línea de comandos">✕</button>
          <button aria-label="Personalizar"><svg class="i20"><use href="#wrench"/></svg></button>
        </div>
        <label class="command-field">
          <svg class="prompt"><use href="#prompt"/></svg><i class="caret big-caret"></i>
          <input type="text" placeholder="Escriba un comando" aria-label="Escriba un comando">
          <i class="caret-up"></i>
        </label>
      </div>
    </div>
  </main>

  <!-- Status bar -->
  <footer class="status-bar">
    <nav class="tab-bar layout-tabs">
      <button class="menu-button" aria-label="Menú de presentaciones"><svg class="burger"><use href="#burger"/></svg></button>
      <button class="tab active">Modelo</button>
      <button class="tab">Presentación1</button>
      <i class="slash"></i>
      <button class="tab">Presentación2</button>
      <i class="slash"></i>
      <button class="tab-add" aria-label="Nueva presentación"><svg class="i18"><use href="#plus"/></svg></button>
      <i class="slash"></i>
    </nav>
    <div class="status-tools">
      <div class="status-group"><button class="model">MODELO</button></div>
      <div class="status-group">
        <button class="on" aria-label="Rejilla"><svg class="i20"><use href="#s-grid"/></svg></button>
        <button aria-label="Forzar cursor"><svg class="i20"><use href="#s-dots"/></svg></button>
        <button class="arrow" aria-label="Opciones de forzado"><i class="caret big-caret"></i></button>
      </div>
      <div class="status-group">
        <button aria-label="Orto"><svg class="i20"><use href="#s-ortho"/></svg></button>
        <button class="on" aria-label="Rastreo polar"><svg class="i20"><use href="#s-polar"/></svg></button>
        <button class="arrow" aria-label="Opciones polares"><i class="caret big-caret"></i></button>
        <button aria-label="Isométrico"><svg class="i20"><use href="#s-iso"/></svg></button>
        <button class="arrow" aria-label="Opciones isométricas"><i class="caret big-caret"></i></button>
        <button class="on" aria-label="Rastreo"><svg class="i20"><use href="#s-track"/></svg></button>
        <button class="on" aria-label="Referencia a objetos"><svg class="i20"><use href="#s-snap"/></svg></button>
        <button class="arrow" aria-label="Opciones de referencia"><i class="caret big-caret"></i></button>
      </div>
      <div class="status-group">
        <button class="on" aria-label="Visibilidad de anotación"><svg class="i20"><use href="#s-annovis"/></svg></button>
        <button aria-label="Escala automática"><svg class="i20"><use href="#s-annoauto"/></svg></button>
        <button aria-label="Escala de anotación"><svg class="i20"><use href="#s-anno"/></svg></button>
        <button class="scale-button">1:1<i class="caret big-caret"></i></button>
      </div>
      <div class="status-group">
        <button aria-label="Espacio de trabajo"><svg class="i20"><use href="#s-gear"/></svg></button>
        <button class="arrow" aria-label="Espacios"><i class="caret big-caret"></i></button>
      </div>
      <div class="status-group"><button aria-label="Monitor"><svg class="i20"><use href="#plus"/></svg></button></div>
      <div class="status-group"><button aria-label="Aislar objetos"><svg class="i20"><use href="#s-isolate"/></svg></button></div>
      <div class="status-group wide"><button aria-label="Rendimiento"><svg class="i20"><use href="#s-hw"/></svg></button></div>
      <div class="status-group"><button aria-label="Pantalla limpia"><svg class="i20"><use href="#s-full"/></svg></button></div>
      <div class="status-group"><button aria-label="Personalización"><svg class="i20"><use href="#s-burger"/></svg></button></div>
    </div>
  </footer>

</body>
</html>
```

FILE: styles.css
```
* {
  box-sizing: border-box;
}

body {
  margin: 0;
  height: 100vh;
  display: flex;
  flex-direction: column;
  overflow: hidden;
  background-color: #222933;
  color: #f2f2f2;
  font-family: "Open Sans", "Noto Sans", sans-serif;
  font-size: 14px;
  line-height: 20px;
}

button,
input,
select {
  font: inherit;
  color: inherit;
  background: none;
  border: none;
  padding: 0;
  margin: 0;
}

button {
  display: flex;
  align-items: center;
  cursor: pointer;
  white-space: nowrap;
}

svg {
  display: block;
  flex: none;
}

/* Icons */
.icon-defs { position: absolute; width: 0; height: 0; }
.i8 { width: 8px; height: 8px; }
.i14 { width: 14px; height: 14px; }
.i18 { width: 18px; height: 18px; }
.i20 { width: 20px; height: 20px; }
.i28 { width: 28px; height: 28px; }
.i40 { width: 40px; height: 40px; }
.logo { width: 30px; height: 28px; }
.burger { width: 20px; height: 16px; }
.prompt { width: 21px; height: 16px; }

.w { fill: none; stroke: #cfcfcf; }
.ww { fill: none; stroke: #f2f2f2; stroke-width: 1.3; }
.b { fill: none; stroke: #6dbcf8; }
.n { fill: none; stroke: #41474f; stroke-width: 1.5; }
.fw { fill: #d9d9d9; }
.fb { fill: #6dbcf8; }
.fy { fill: #ffd479; }

.caret {
  flex: none;
  width: 0;
  height: 0;
  border-left: 3px solid transparent;
  border-right: 3px solid transparent;
  border-top: 4px solid #e0e0e0;
}

.big-caret {
  border-left-width: 5px;
  border-right-width: 5px;
  border-top-width: 5px;
}

.caret-right {
  border-top: 5px solid transparent;
  border-bottom: 5px solid transparent;
  border-left: 5px solid #e0e0e0;
}

.caret-up {
  border-left: 4px solid transparent;
  border-right: 4px solid transparent;
  border-bottom: 4px solid #555;
}

/* Title bar */
.title-bar {
  height: 40px;
  padding: 0 22px 6px 15px;
  display: flex;
  align-items: center;
}

.quick-access {
  display: flex;
  align-items: center;
  gap: 10px;
}

.app-logo {
  gap: 6px;
  margin-right: 5px;
}

.app-logo .caret {
  border-left-width: 4px;
  border-right-width: 4px;
}

.drop {
  gap: 8px;
}

.redo {
  opacity: 0.4;
}

.redo svg {
  transform: scaleX(-1);
}

.customize {
  border-top: 2px solid #e0e0e0;
  padding-top: 3px;
}

.share {
  color: #79c3f9;
  gap: 6px;
}

.app-title {
  display: flex;
  gap: 22px;
  margin: 0 auto;
  font-size: 14px;
  font-weight: 400;
  white-space: nowrap;
}

.info-center {
  display: flex;
  align-items: center;
  gap: 10px;
}

.search-box {
  width: 223px;
  height: 26px;
  padding: 0 4px;
  margin-right: -4px;
  background-color: #4a5266;
  font-size: 13px;
  font-style: italic;
}

.search-box::placeholder {
  color: #b9bdc6;
  opacity: 1;
}

.sign-in {
  gap: 7px;
}

.sign-in .caret {
  margin: 0 6px 0 14px;
}

.help {
  border-left: 1px solid #4a5266;
  padding-left: 10px;
  margin-left: 2px;
}

.question {
  width: 20px;
  height: 20px;
  border-radius: 50%;
  background-color: #d9d9d9;
  color: #444;
  font-weight: 600;
}

.window-buttons {
  display: flex;
  gap: 44px;
  margin-left: 105px;
}

/* Ribbon tabs */
.ribbon-tabs {
  height: 25px;
  padding-left: 1px;
  display: flex;
}

.ribbon-tabs button {
  padding: 0 12px;
  color: #b4b7bc;
}

.ribbon-tabs .active {
  background-color: #3b4453;
  color: #f2f2f2;
}

.ribbon-tabs .collapse {
  padding-left: 32px;
  gap: 5px;
}

.collapse-box {
  width: 19px;
  height: 9px;
  display: flex;
  align-items: center;
  justify-content: center;
  background-color: #f2f2f2;
}

/* Ribbon */
.ribbon {
  height: 124px;
  display: grid;
  grid-template-columns: 300fr 240fr 167fr 357fr 167fr 294fr 85fr 104fr 116fr 87fr;
  background-color: #3b4453;
}

.panel {
  min-width: 0;
  display: flex;
  flex-direction: column;
  border-right: 1px solid #222933;
}

.tools {
  flex: 1;
  display: grid;
  align-items: start;
  padding-top: 4px;
}

.draw-tools { grid-template-columns: 50px 60px 78px 56px auto; }
.modify-tools { grid-template-columns: 111px 36px 50px auto; padding-left: 7px; }
.note-tools { grid-template-columns: 62px 58px auto; padding-left: 3px; }
.layer-tools { grid-template-columns: 90px auto; padding-left: 2px; }
.block-tools { grid-template-columns: 58px 56px auto; }
.prop-tools { grid-template-columns: 94px auto; }
.group-tools { grid-template-columns: 52px auto; }
.util-tools { grid-template-columns: 74px auto; }
.clip-tools { grid-template-columns: 70px auto; }
.view-tools { grid-template-columns: 78px; }

.large {
  flex-direction: column;
  padding-top: 4px;
  text-align: center;
}

.large svg {
  margin-bottom: 5px;
}

.large .caret {
  margin-top: 3px;
}

.large.pressed {
  height: 90px;
  background-color: #46607e;
  border: 1px solid #6dbcf8;
}

.stack {
  display: flex;
  flex-direction: column;
}

.draw-tools .stack {
  padding-left: 6px;
}

.block-tools .stack {
  padding-left: 8px;
}

.small {
  height: 31px;
  gap: 7px;
}

.small .caret {
  margin-left: 3px;
}

.small.pressed {
  width: 29px;
  background-color: #46607e;
  border: 1px solid #6dbcf8;
}

.group-tools .small {
  padding-left: 4px;
}

.panel-title {
  height: 27px;
  padding-top: 4px;
  display: flex;
  align-items: center;
  justify-content: center;
  gap: 10px;
}

.title-row {
  display: flex;
  padding: 0 5px;
  gap: 8px;
}

.title-row .panel-title {
  flex: 1;
}

.launcher {
  padding-top: 4px;
}

.view-title {
  padding: 0 14px 0 0;
}

.combo {
  height: 28px;
  display: flex;
  align-items: center;
  gap: 5px;
  padding: 0 4px;
  background-color: #4b576b;
  border: 1px solid #2a3240;
}

.combo select {
  flex: 1;
  min-width: 0;
  appearance: none;
}

.swatch {
  width: 18px;
  height: 18px;
  background-color: #fff;
}

.sample {
  width: 80px;
  height: 1px;
  background-color: #fff;
}

.layer-side {
  padding: 1px 2px;
}

.layer-icons {
  display: grid;
  grid-template-columns: repeat(5, 28px);
  grid-auto-rows: 31px;
  padding-left: 3px;
  column-gap: 2px;
}

.prop-rows {
  display: grid;
  grid-template-columns: 20px auto;
  grid-auto-rows: 30px;
  column-gap: 3px;
  align-items: center;
  padding: 2px;
}

.prop-rows .swatch {
  margin: 0 4px 0 3px;
}

/* File and layout tabs */
.tab-bar {
  display: flex;
  align-items: center;
}

.file-tabs {
  height: 33px;
}

.menu-button {
  padding: 0 17px;
}

.slash {
  width: 1px;
  height: 20px;
  background-color: #4b576b;
  transform: skewX(-18deg);
}

.tab {
  height: 30px;
  padding: 0 12px;
}

.file-tabs .tab {
  align-self: flex-end;
  padding: 0 10px 0 14px;
}

.tab.active {
  display: flex;
  align-items: center;
  gap: 10px;
  padding: 0 21px;
  background-color: #3b4453;
  font-weight: 700;
  clip-path: polygon(11px 0, 100% 0, calc(100% - 11px) 100%, 0 100%);
}

.file-tabs .tab.active {
  padding: 0 14px 0 21px;
}

.tab-close {
  color: #b4b7bc;
}

.tab-add {
  padding: 0 16px 0 12px;
}

.layout-tabs .slash {
  margin: 0 2px;
}

/* Workspace */
.workspace {
  flex: 1;
  min-height: 0;
  display: flex;
  border-top: 5px solid #3b4453;
  border-bottom: 5px solid #3b4453;
}

.palette {
  width: 25px;
  margin: 6px 2px 6px 0;
  display: flex;
  align-items: center;
  justify-content: center;
  position: relative;
  background-color: #3b4453;
}

.palette span {
  writing-mode: vertical-rl;
  transform: rotate(180deg);
}

.palette-grip {
  position: absolute;
  top: 4px;
  right: 11px;
  width: 9px;
  height: 3px;
  border-top: 1px dotted #c5cbd5;
  border-bottom: 1px dotted #c5cbd5;
}

.canvas {
  flex: 1;
  position: relative;
  overflow: hidden;
  background-color: #212830;
}

.drawing {
  width: 100%;
  height: 100%;
  fill: none;
}

.drawing .outline,
.drawing .dims { stroke: #f0f0f0; stroke-width: 1.2; }
.drawing .rotor { stroke: #e6e6e6; stroke-width: 1.4; }
.drawing .valve { stroke: #eeee00; stroke-width: 1.4; }
.drawing .red { stroke: #f50000; stroke-width: 1.3; }
.drawing .magenta { stroke: #f000f0; stroke-width: 1.3; }
.drawing .cyan { stroke: #00e8e8; stroke-width: 1.3; }
.drawing .green { stroke: #00e800; stroke-width: 1.3; }
.drawing .pink { stroke: #c99bc3; stroke-width: 1.3; }

.cad-text {
  fill: #fff;
  font-family: "Liberation Sans", Arial, sans-serif;
  font-size: 33px;
}

.cad-text .frac {
  font-size: 23px;
  text-anchor: middle;
}

.view-controls {
  position: absolute;
  top: 6px;
  left: 4px;
  display: flex;
  gap: 1px;
}

.view-window {
  position: absolute;
  top: 10px;
  right: 12px;
  display: flex;
  gap: 11px;
}

.view-cube {
  position: absolute;
  top: 47px;
  right: 20px;
  display: flex;
  flex-direction: column;
  align-items: center;
  gap: 25px;
}

.compass {
  width: 136px;
  height: 137px;
  display: grid;
  grid-template: 20px 1fr 20px / 20px 1fr 20px;
  place-items: center;
  color: #b3b6b9;
  font-size: 23px;
  font-weight: 700;
  background: radial-gradient(circle, transparent 49px, #444b54 50px, #444b54 63px, transparent 64px);
}

.north { grid-area: 1 / 2; }
.west { grid-area: 2 / 1; }
.cube { grid-area: 2 / 2; }
.east { grid-area: 2 / 3; }
.south { grid-area: 3 / 2; }

.cube {
  width: 56px;
  height: 54px;
  justify-content: center;
  border: 11px solid #acb0b4;
  background-color: #a1a5ae;
  color: #474d57;
  font-family: Roboto, sans-serif;
  font-size: 11px;
  font-weight: 700;
}

.scu {
  height: 20px;
  padding: 0 5px;
  gap: 7px;
  border: 1px solid #80838d;
  border-radius: 4px;
  background-color: #9a9da8;
  color: #585d68;
  font-family: "Liberation Sans", sans-serif;
  font-size: 12px;
}

.scu span {
  color: #d0d2d8;
}

.nav-bar {
  position: absolute;
  top: 259px;
  right: 3px;
  width: 41px;
  height: 259px;
  display: flex;
  flex-direction: column;
  align-items: center;
  gap: 5px;
  background-color: #5a6068;
  border: 1px solid #6d727a;
  border-radius: 3px;
  box-shadow: 0 0 2px 1px #171b22;
}

.nav-bar button {
  flex-direction: column;
  gap: 8px;
}

.nav-bar hr {
  width: 36px;
  margin: 1px 0 0;
  border: none;
  border-top: 1px solid #6b7178;
}

.nav-bar .caret {
  border-top-color: #41474f;
}

.dot {
  width: 10px;
  height: 10px;
  margin: 1px 1px 4px;
  align-self: flex-end;
  border-radius: 50%;
  background-color: #484e56;
  color: #6d727a;
  font-size: 10px;
  line-height: 10px;
  text-align: center;
}

.dot.last {
  margin-top: auto;
  margin-bottom: 1px;
}

/* Command line */
.command-line {
  position: absolute;
  left: 0;
  right: 0;
  bottom: 0;
  margin: 0 auto;
  width: 52.7%;
  min-width: 400px;
  height: 33px;
  display: flex;
}

.command-handle {
  display: flex;
  align-items: center;
  justify-content: space-between;
  width: 72px;
  padding: 0 6px;
  background-color: #2b303d;
  border-radius: 4px 0 0 0;
  color: #c5c5c5;
}

.grip {
  width: 6px;
  height: 22px;
  background: repeating-linear-gradient(#c5c5c5 0 2px, transparent 2px 4px);
}

.command-field {
  flex: 1;
  display: flex;
  align-items: center;
  gap: 2px;
  padding: 0 6px 0 5px;
  background-color: #bdbec0;
}

.command-field .caret {
  border-top-color: #555;
}

.command-field input {
  flex: 1;
  padding-left: 6px;
  color: #333;
  font-family: "DejaVu Sans Mono", monospace;
  font-size: 15px;
  font-style: italic;
}

.command-field input::placeholder {
  color: #666;
  opacity: 1;
}

/* Status bar */
.status-bar {
  height: 37px;
  display: flex;
  justify-content: space-between;
  align-items: flex-start;
  border-bottom: 1px solid #46423f;
}

.layout-tabs .menu-button {
  padding-right: 11px;
}

.layout-tabs .tab:not(.active) {
  padding: 0 12px 0 10px;
}

.status-tools {
  display: flex;
  gap: 3px;
  padding: 2px 3px 0 0;
}

.status-group {
  height: 31px;
  display: flex;
  align-items: center;
  padding: 0 1px;
  background-color: #3b4453;
}

.status-group button {
  width: 28px;
  height: 28px;
  margin-right: 2px;
  justify-content: center;
}

.status-group button:last-child {
  margin-right: 0;
}

.status-group .on {
  background-color: #5f8dc0;
}

.status-group .arrow {
  width: 18px;
}

.status-group .model {
  width: 68px;
}

.status-group .scale-button {
  width: 38px;
  gap: 4px;
}

.status-group.wide {
  padding: 0 5px;
}
```
